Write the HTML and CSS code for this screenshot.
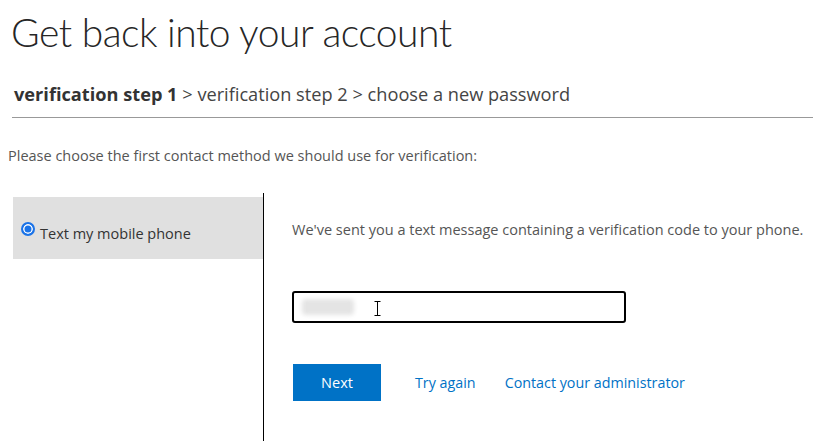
FILE: index.html
```html
<!DOCTYPE html>
<html lang="en">
<head>
    <meta charset="UTF-8">
    <meta name="viewport" content="width=device-width, initial-scale=1.0">
    <title>Get back into your account</title>
    <link rel="stylesheet" href="styles.css">
</head>
<body>
    <div class="page">
        <h1 class="title">Get back into your account</h1>
        <div class="steps">
            <span class="current">verification step 1</span> &gt; verification step 2 &gt; choose a new password
        </div>
        <div class="rule"></div>
        <p class="intro">Please choose the first contact method we should use for verification:</p>

        <div class="verify">
            <div class="methods">
                <label class="method selected">
                    <span class="radio"></span>
                    <span class="method-text">Text my mobile phone</span>
                </label>
            </div>
            <div class="detail">
                <p class="message">We've sent you a text message containing a verification code to your phone.</p>
                <div class="code-input">
                    <span class="blurred"></span>
                    <svg class="cursor" width="7" height="15" viewBox="0 0 7 15">
                        <path d="M0.5 0.5h6M3.5 0.5v14M0.5 14.5h6" stroke="#000" stroke-width="1" fill="none"/>
                    </svg>
                </div>
                <div class="actions">
                    <button class="next">Next</button>
                    <a href="#" class="link">Try again</a>
                    <a href="#" class="link">Contact your administrator</a>
                </div>
            </div>
        </div>
    </div>
</body>
</html>
```

FILE: styles.css
```css
body {
    margin: 0;
    padding: 0;
    background-color: #fff;
    font-family: "Open Sans", "Noto Sans", Arial, sans-serif;
    color: #333;
}
.page {
    padding: 0 0 0 8px;
}
.title {
    margin: 0;
    padding: 6px 0 0 3px;
    font-family: Lato, "Open Sans", sans-serif;
    font-size: 39px;
    font-weight: 300;
    line-height: 52px;
    letter-spacing: -0.5px;
    color: #262626;
}
.steps {
    margin-top: 24px;
    padding-left: 6px;
    font-size: 18.2px;
    line-height: 24px;
    color: #444;
}
.steps .current {
    font-weight: bold;
    color: #333;
}
.rule {
    margin: 11px 0 0 4px;
    height: 1px;
    background-color: #999;
}
.intro {
    margin: 29px 0 0;
    font-size: 14.5px;
    line-height: 18px;
    color: #555;
}
.verify {
    display: flex;
    margin-top: 28px;
    padding-left: 5px;
    height: 250px;
}
.methods {
    width: 250px;
    padding-top: 4px;
    border-right: 1px solid #000;
}
.method {
    display: flex;
    align-items: center;
    gap: 5px;
    height: 62px;
    padding: 0 8px;
    font-size: 14.5px;
    color: #333;
    cursor: pointer;
}
.method.selected {
    background-color: #e0e0e0;
}
.method-text {
    margin-top: 10px;
}
.radio {
    flex-shrink: 0;
    width: 10px;
    height: 10px;
    margin-top: 2px;
    border-radius: 50%;
    border: 2px solid #1a73e8;
    background-color: #1a73e8;
    box-shadow: inset 0 0 0 1.5px #fff;
}
.detail {
    padding-left: 28px;
}
.message {
    margin: 28px 0 0;
    font-size: 14.5px;
    line-height: 18px;
    color: #555;
}
.code-input {
    display: flex;
    align-items: center;
    margin-top: 52px;
    width: 330px;
    height: 28px;
    border: 2px solid #000;
    border-radius: 3px;
}
.blurred {
    width: 52px;
    height: 16px;
    margin-left: 8px;
    background-color: #e4e4e4;
    border-radius: 4px;
    filter: blur(2px);
}
.cursor {
    margin-left: 20px;
    margin-top: 2px;
}
.actions {
    display: flex;
    align-items: center;
    margin-top: 41px;
}
.next {
    width: 88px;
    height: 37px;
    margin-left: 1px;
    border: none;
    background-color: #0072c6;
    color: #fff;
    font-family: inherit;
    font-size: 14.5px;
    cursor: pointer;
}
.link {
    margin-left: 34px;
    font-size: 14.3px;
    color: #0072c6;
    text-decoration: none;
}
.link + .link {
    margin-left: 29px;
}
```
